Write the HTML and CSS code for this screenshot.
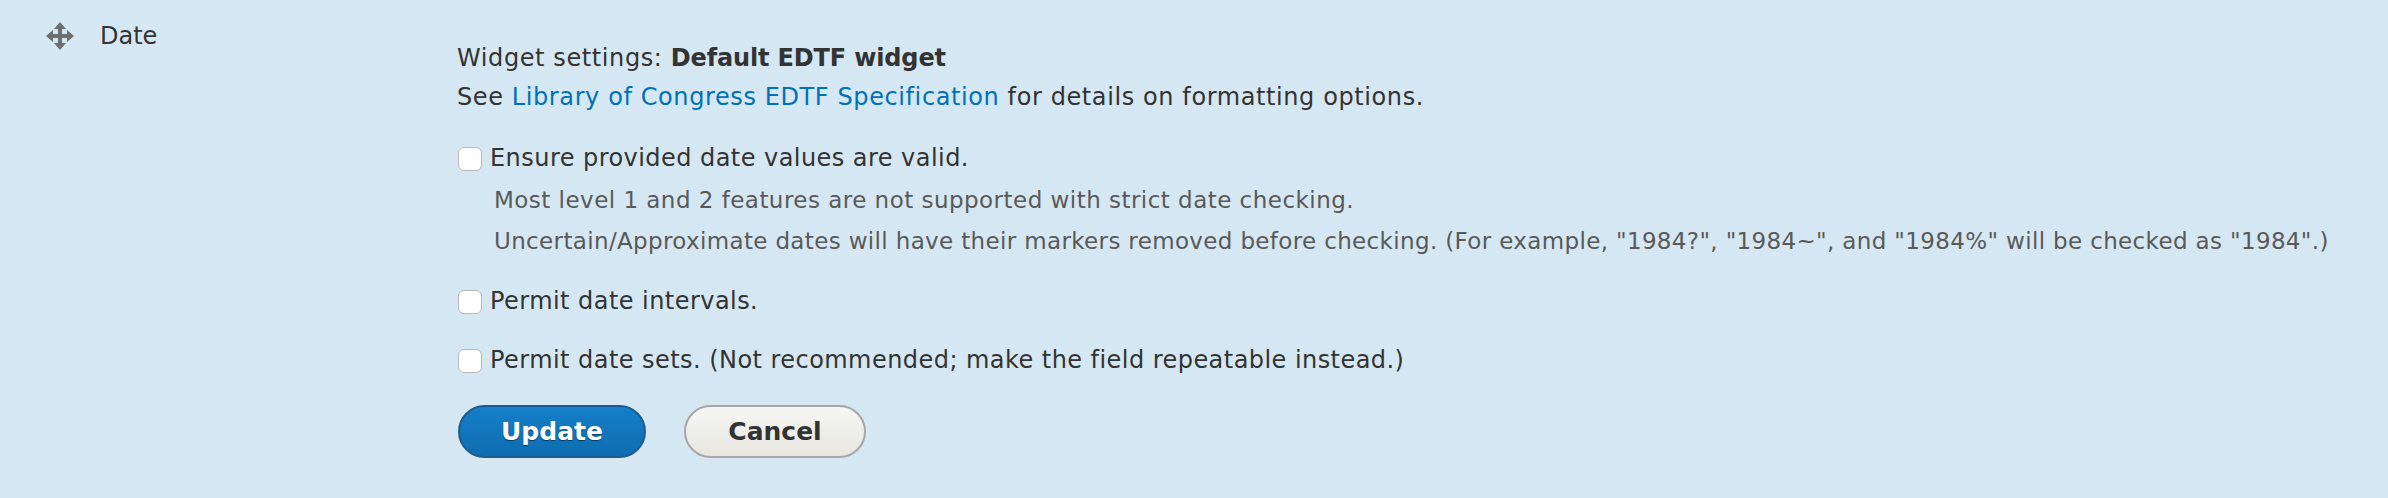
FILE: index.html
```html
<!DOCTYPE HTML>
<html>
	<head>
		<title>Date field settings</title>
		<link rel="stylesheet" href="styles.css">
	</head>
	<body>
		<div class="row">
			<div class="handle">
				<svg class="move" width="28" height="28" viewBox="0 0 28 28">
					<path fill="#6f6f6f" d="M14 0l6 7h-4v5h5V8l7 6-7 6v-4h-5v5h4l-6 7-6-7h4v-5H7v4l-7-6 7-6v4h5V7H8z"/>
				</svg>
				<span class="name">Date</span>
			</div>
			<form class="settings">
				<div class="intro">
					<div>Widget settings: <b>Default EDTF widget</b></div>
					<div>See <a href="#">Library of Congress EDTF Specification</a> for details on formatting options.</div>
				</div>
				<div class="option">
					<label><input type="checkbox"><span>Ensure provided date values are valid.</span></label>
					<div class="desc">
						<div class="first">Most level 1 and 2 features are not supported with strict date checking.</div>
						<div>Uncertain/Approximate dates will have their markers removed before checking. (For example, "1984?", "1984~", and "1984%" will be checked as "1984".)</div>
					</div>
				</div>
				<div class="option">
					<label><input type="checkbox"><span>Permit date intervals.</span></label>
				</div>
				<div class="option">
					<label><input type="checkbox"><span>Permit date sets. (Not recommended; make the field repeatable instead.)</span></label>
				</div>
				<div class="actions">
					<button type="button" class="btn primary">Update</button>
					<button type="button" class="btn">Cancel</button>
				</div>
			</form>
		</div>
	</body>
</html>
```
FILE: styles.css
```css
html, body
{
	margin:0;
	height:498px;
	overflow:hidden;
}

body
{
	background-color:#d5e7f2;
	color:#333333;
	font-family:"DejaVu Sans", sans-serif;
	font-size:24px;
	letter-spacing:0.6px;
}

.row
{
	display:flex;
	padding:22px 0 0 46px;
}

.handle
{
	display:flex;
	align-items:flex-start;
	width:411px;
	flex:none;
}

.move
{
	display:block;
}

.name
{
	margin-left:26px;
	line-height:28px;
	letter-spacing:0;
}

.settings
{
	padding-top:17px;
}

.intro
{
	line-height:39px;
}

.intro b
{
	letter-spacing:-0.15px;
}

.intro a
{
	color:#0071b8;
	text-decoration:none;
}

.option
{
	margin-top:22px;
}

.option label
{
	display:flex;
	align-items:center;
	line-height:39px;
	letter-spacing:0.45px;
}

.option + .option
{
	margin-top:20px;
}

.option input
{
	appearance:none;
	width:24px;
	height:24px;
	margin:0 8px 0 1px;
	background-color:white;
	border:1px solid #b8b8b8;
	border-radius:6px;
}

.desc
{
	margin:2px 0 0 37px;
	color:#595959;
	line-height:41px;
	font-size:23px;
	letter-spacing:0.35px;
}

.desc .first
{
	letter-spacing:0.47px;
}

.actions
{
	display:flex;
	gap:38px;
	margin:25px 0 0 1px;
}

.btn
{
	width:182px;
	height:53px;
	padding:0;
	font-family:inherit;
	font-size:25px;
	font-weight:bold;
	color:#333333;
	background:linear-gradient(#f6f6f3, #e7e7df);
	border:2px solid #a6a6a6;
	border-radius:27px;
}

.primary
{
	width:188px;
	color:white;
	background:linear-gradient(#157fc9, #0f6db0);
	border-color:#1e5c90;
	text-shadow:0 1px 1px rgba(0,0,0,0.5);
}
```
